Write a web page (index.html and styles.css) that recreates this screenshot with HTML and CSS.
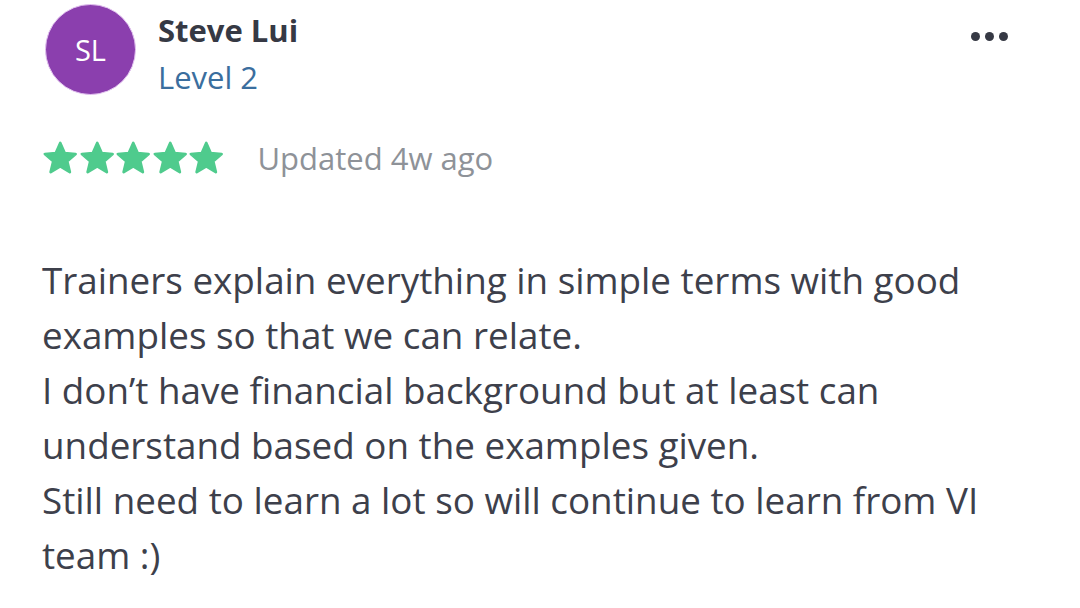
FILE: index.html
```html
<!DOCTYPE html>
<html>
<head>
<meta charset="utf-8">
<link rel="stylesheet" href="styles.css">
</head>
<body>
<div class="review">
  <div class="header">
    <div class="avatar">SL</div>
    <div class="who">
      <div class="name">Steve Lui</div>
      <div class="level">Level 2</div>
    </div>
    <div class="more"><span></span><span></span><span></span></div>
  </div>
  <div class="meta">
    <div class="stars">
      <svg viewBox="0 0 24 24"><path d="M12 2l2.9 6.6 7.2.6-5.5 4.8 1.7 7.1L12 17.3l-6.3 3.8 1.7-7.1-5.5-4.8 7.2-.6z"/></svg>
      <svg viewBox="0 0 24 24"><path d="M12 2l2.9 6.6 7.2.6-5.5 4.8 1.7 7.1L12 17.3l-6.3 3.8 1.7-7.1-5.5-4.8 7.2-.6z"/></svg>
      <svg viewBox="0 0 24 24"><path d="M12 2l2.9 6.6 7.2.6-5.5 4.8 1.7 7.1L12 17.3l-6.3 3.8 1.7-7.1-5.5-4.8 7.2-.6z"/></svg>
      <svg viewBox="0 0 24 24"><path d="M12 2l2.9 6.6 7.2.6-5.5 4.8 1.7 7.1L12 17.3l-6.3 3.8 1.7-7.1-5.5-4.8 7.2-.6z"/></svg>
      <svg viewBox="0 0 24 24"><path d="M12 2l2.9 6.6 7.2.6-5.5 4.8 1.7 7.1L12 17.3l-6.3 3.8 1.7-7.1-5.5-4.8 7.2-.6z"/></svg>
    </div>
    <div class="updated">Updated 4w ago</div>
  </div>
  <p class="text">Trainers explain everything in simple terms with good examples so that we can relate.<br>I don’t have financial background but at least can understand based on the examples given.<br>Still need to learn a lot so will continue to learn from VI team :)</p>
</div>
</body>
</html>
```
FILE: styles.css
```css
html, body {
  margin: 0;
  padding: 0;
  background: #ffffff;
}
body {
  width: 1080px;
  height: 608px;
  overflow: hidden;
  font-family: "Open Sans", sans-serif;
}
.review {
  padding: 4px 72px 0 42px;
}
.header {
  display: flex;
  align-items: flex-start;
}
.avatar {
  width: 91px;
  height: 91px;
  border-radius: 50%;
  background: #8b3fae;
  border: 1px solid #e3c4f0;
  box-sizing: border-box;
  margin-left: 3px;
  color: #fff;
  font-size: 29px;
  display: flex;
  align-items: center;
  justify-content: center;
  flex-shrink: 0;
}
.who {
  margin-left: 22px;
  flex: 1;
}
.name {
  font-size: 31px;
  font-weight: 700;
  color: #363944;
  line-height: 40px;
  margin-top: 6px;
}
.level {
  font-size: 31px;
  color: #3a6e9e;
  line-height: 40px;
  margin-top: 7px;
}
.more {
  display: flex;
  gap: 5px;
  margin-top: 28px;
}
.more span {
  width: 9px;
  height: 9px;
  border-radius: 50%;
  background: #363944;
}
.meta {
  display: flex;
  align-items: center;
  margin-top: 40px;
}
.stars {
  display: flex;
  gap: 0;
}
.stars svg {
  width: 36.5px;
  height: 36.5px;
  fill: #4fcb8d;
  stroke: #4fcb8d;
  stroke-width: 1.8;
  stroke-linejoin: round;
}
.updated {
  margin-left: 33px;
  font-size: 31px;
  color: #8e9298;
}
.text {
  margin: 74px 0 0 0;
  font-size: 36.8px;
  line-height: 55px;
  color: #3d404b;
}
```
